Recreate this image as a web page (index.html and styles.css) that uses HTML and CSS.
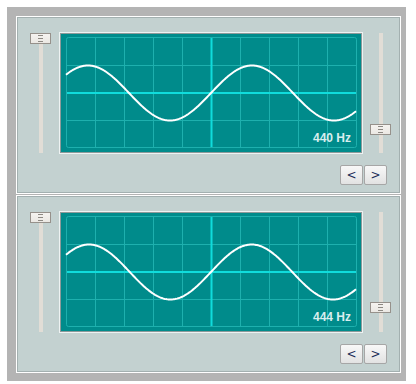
FILE: index.html
```html
<!DOCTYPE html>
<html lang="en">
<head>
    <meta charset="UTF-8">
    <title>Tone generator</title>
    <link rel="stylesheet" href="styles.css">
</head>
<body>

    <div class="frame">
        <div class="panel">
            <div class="row">
                <div class="slider">
                    <div class="track"></div>
                    <div class="thumb" style="top: 0px"><span class="grip"></span></div>
                </div>
                <div class="scope">
                    <svg class="screen" data-freq="440" width="304" height="122"></svg>
                    <span class="hz">440 Hz</span>
                </div>
                <div class="slider">
                    <div class="track"></div>
                    <div class="thumb" style="top: 91px"><span class="grip"></span></div>
                </div>
            </div>
            <div class="buttons">
                <button class="nav">&lt;</button>
                <button class="nav">&gt;</button>
            </div>
        </div>

        <div class="panel">
            <div class="row">
                <div class="slider">
                    <div class="track"></div>
                    <div class="thumb" style="top: 0px"><span class="grip"></span></div>
                </div>
                <div class="scope">
                    <svg class="screen" data-freq="444" width="304" height="122"></svg>
                    <span class="hz">444 Hz</span>
                </div>
                <div class="slider">
                    <div class="track"></div>
                    <div class="thumb" style="top: 90px"><span class="grip"></span></div>
                </div>
            </div>
            <div class="buttons">
                <button class="nav">&lt;</button>
                <button class="nav">&gt;</button>
            </div>
        </div>
    </div>

    <script>
        var NS = 'http://www.w3.org/2000/svg';

        function add(svg, tag, attrs) {
            var el = document.createElementNS(NS, tag);
            for (var k in attrs) el.setAttribute(k, attrs[k]);
            svg.appendChild(el);
            return el;
        }

        document.querySelectorAll('.screen').forEach(function (svg) {
            var freq = Number(svg.dataset.freq);

            // рамка экрана
            add(svg, 'rect', { x: 0.5, y: 0.5, width: 303, height: 121, fill: 'none', stroke: '#eef2f2' });
            add(svg, 'rect', { x: 1.5, y: 1.5, width: 301, height: 119, fill: '#008b8b', stroke: '#8c9a9a' });

            // сетка
            add(svg, 'rect', { x: 7.5, y: 5.5, width: 290, height: 110, rx: 2, fill: 'none', stroke: '#1eb0ae' });
            for (var i = 1; i < 10; i++) {
                if (i === 5) continue;
                var x = 7.5 + 29 * i;
                add(svg, 'line', { x1: x, y1: 6, x2: x, y2: 115, stroke: '#1eb0ae' });
            }
            [33.5, 88.5].forEach(function (y) {
                add(svg, 'line', { x1: 8, y1: y, x2: 297, y2: y, stroke: '#1eb0ae' });
            });
            add(svg, 'line', { x1: 8, y1: 61, x2: 297, y2: 61, stroke: '#10dcdc', 'stroke-width': 2 });
            add(svg, 'line', { x1: 152.5, y1: 6, x2: 152.5, y2: 115, stroke: '#10dcdc', 'stroke-width': 2 });

            // синусоида
            var period = 72160 / freq;
            var pts = [];
            for (var px = 7; px <= 297; px += 1) {
                var py = 61 - 27.5 * Math.sin(2 * Math.PI * (px - 152) / period);
                pts.push(px + ',' + py.toFixed(2));
            }
            add(svg, 'polyline', {
                points: pts.join(' '),
                fill: 'none',
                stroke: '#ffffff',
                'stroke-width': 2,
                'stroke-linejoin': 'round'
            });
        });
    </script>

</body>
</html>
```

FILE: styles.css
```css
html, body {
    margin: 0;
    padding: 0;
    background-color: #ffffff;
    font-family: 'Liberation Sans', Arial, sans-serif;
}

.frame {
    width: 399px;
    height: 374px;
    margin: 7px;
    box-sizing: border-box;
    padding: 9px 5px 0 9px;
    background-color: #b4b4b4;
    display: flex;
    flex-direction: column;
    gap: 1px;
}

.panel {
    height: 178px;
    box-sizing: border-box;
    padding: 15px 9px 0 13px;
    background-color: #c3d1d0;
    border: 1px solid #ffffff;
    box-shadow: inset 0 0 0 1px #a3b0b0;
}

.row {
    display: flex;
    align-items: flex-start;
    gap: 8px;
}

.row .slider:last-child {
    margin-left: -1px;
}

.slider {
    position: relative;
    width: 21px;
    height: 120px;
    margin-top: 1px;
}

.track {
    width: 4px;
    height: 120px;
    margin: 0 auto;
    background-color: #e1ddd6;
}

.thumb {
    position: absolute;
    left: 0;
    width: 21px;
    height: 11px;
    box-sizing: border-box;
    background: linear-gradient(#f5f3f0, #ebe8e3);
    border: 1px solid #96918b;
}

.grip {
    position: absolute;
    left: 7px;
    top: 4px;
    width: 5px;
    height: 1px;
    background-color: #8d8983;
    box-shadow: 0 -3px 0 #8d8983, 0 3px 0 #8d8983;
}

.scope {
    position: relative;
    width: 304px;
    height: 122px;
}

.screen {
    display: block;
}

.hz {
    position: absolute;
    right: 12px;
    bottom: 10px;
    font-size: 12px;
    line-height: 12px;
    font-weight: bold;
    color: #d8eeee;
}

.buttons {
    display: flex;
    justify-content: flex-end;
    gap: 1px;
    margin-top: 11px;
    margin-right: 4px;
}

.nav {
    width: 23px;
    height: 20px;
    padding: 0;
    border: 1px solid #a6a6a6;
    border-radius: 2px;
    background: linear-gradient(#f8f8f8, #e2e2e2);
    color: #1c2d58;
    font-family: 'DejaVu Sans', sans-serif;
    font-size: 12px;
    line-height: 18px;
}
```
